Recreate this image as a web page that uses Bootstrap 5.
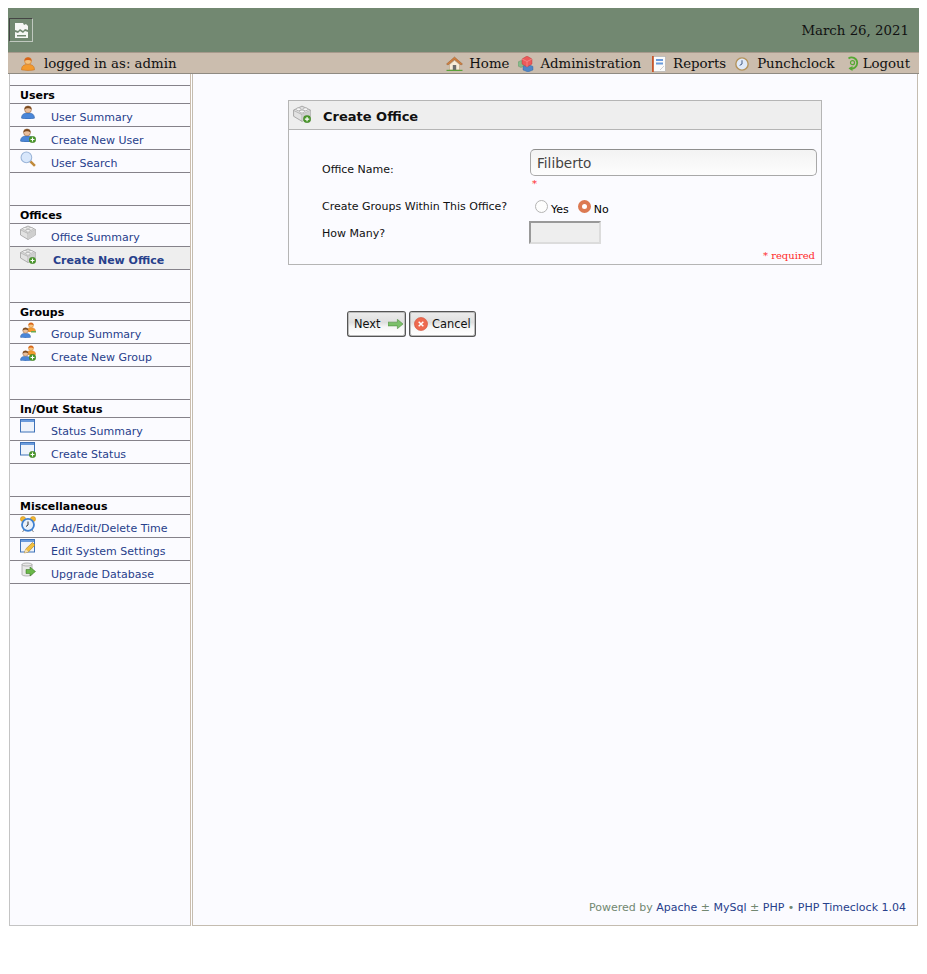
<!DOCTYPE html>
<html lang="en">
<head>
    <meta charset="UTF-8">
    <meta name="viewport" content="width=device-width, initial-scale=1.0">
    <title>PHP Timeclock - Create Office</title>
    <link href="https://cdn.jsdelivr.net/npm/bootstrap@5.3.0/dist/css/bootstrap.min.css" rel="stylesheet">
    <style>
        body { background: #fff; font-family: "DejaVu Sans", sans-serif; font-size: 11px; color: #000; }
        a { text-decoration: none; color: #27408b; }
        .page-wrap { width: 911px; margin: 8px 0 0 8px; }
        .top-bar { height: 44px; background: #728871; padding: 0 10px 0 1px; font-family: "DejaVu Serif", serif; font-size: 13.33px; color: #111; }
        .top-date { padding-top: 2px; }
        .logo-box { width: 24px; height: 24px; border: 1px solid #c0c8bf; border-top-color: #444; border-left-color: #444; background: #728871; }
        .sub-bar { height: 22px; background: #cbbdae; border-top: 1px solid #a69a8c; border-bottom: 1px solid #8f8a82; padding: 1px 9px 0 13px; font-family: "DejaVu Serif", serif; font-size: 13.33px; color: #111; }
        .sub-bar a { color: #111; }
        .who-icon { margin-right: 9px; }
        .top-link svg { flex: none; }
        .link-home svg, .link-admin svg { margin-right: 6px; }
        .link-admin { margin-left: 9px; }
        .link-reports { margin-left: 11px; }
        .link-reports svg { margin-right: 7px; }
        .link-punch { margin-left: 9px; }
        .link-punch svg { margin-right: 8px; }
        .link-logout { margin-left: 11px; }
        .link-logout svg { margin-right: 4px; }
        .body-row { height: 852px; padding-left: 1px; }
        .side-col { width: 182px; background: #fbfbff; border: 1px solid #c4c4c4; border-top: 0; border-right: 1px solid #cbbdae; padding-top: 11px; }
        .gap-col { width: 1px; background: #fff; }
        .main-col { position: relative; width: 726px; background: #fbfbff; border: 1px solid #c4bcb0; border-top: 0; }
        .side-group { margin-bottom: 32px; }
        .side-title { height: 19px; border-top: 1px solid #85828a; border-bottom: 1px solid #85828a; padding: 3px 0 0 10px; font-weight: 700; line-height: 13px; }
        .side-item { height: 23px; border-bottom: 1px solid #85828a; padding-left: 10px; line-height: 13px; }
        .side-item svg { flex: none; margin-top: 1px; width: 16px; height: 16px; }
        .side-item a { margin: 7px 0 0 15px; }
        .side-item.is-current { background: #eee; }
        .side-item.is-current a { font-weight: 700; margin-left: 17px; }
        .form-box { width: 534px; height: 165px; margin: 26px 0 0 95px; border: 1px solid #b5b5b5; }
        .form-head { height: 29px; background: #eee; border-bottom: 1px solid #b5b5b5; padding-left: 4px; font-size: 13px; font-weight: 700; color: #111; }
        .form-head svg { margin-top: 4px; }
        .form-head span { margin: 8px 0 0 12px; line-height: 15px; }
        .form-row { padding-left: 33px; }
        .row-name { height: 65px; }
        .row-radio { height: 26px; }
        .row-many { height: 23px; }
        .field-label { width: 208px; line-height: 13px; color: #111; }
        .label-name { margin-top: 33px; }
        .label-radio { margin-top: 5px; }
        .label-many { margin-top: 6px; }
        .name-input { width: 287px; height: 27px; margin-top: 19px; border: 1px solid #a8a8a8; border-top-color: #8e8e8e; border-radius: 5px; background: linear-gradient(#f3f3f3, #fdfdfd); font-size: 13.6px; color: #444; padding: 0 6px; font-family: "DejaVu Sans", sans-serif; outline: 0; }
        .req-star { color: #ff2a2a; font-family: "DejaVu Serif", serif; font-size: 10px; line-height: 10px; margin: 3px 0 0 2px; }
        .radio-set { margin-top: 5px; }
        .radio-off, .radio-on { display: block; width: 13px; height: 13px; border-radius: 50%; flex: none; }
        .radio-off { border: 1px solid #b4b4b4; background: #fdfdfd; margin-left: 5px; }
        .radio-on { border: 4px solid #dc7a52; background: #fff; margin-left: 9px; }
        .radio-text { margin: 3px 0 0 3px; line-height: 13px; }
        .how-many { width: 72px; height: 23px; margin-left: -1px; background: #eee; border: 2px solid #dcdcdc; border-top-color: #999; border-left-color: #999; }
        .req-note { color: #ff2a2a; font-family: "DejaVu Serif", serif; font-size: 10px; line-height: 12px; text-align: right; padding-right: 6px; margin-top: 6px; }
        .btn-row { margin: 46px 0 0 154px; gap: 3px; }
        .img-btn { height: 26px; border: 1px solid #555; border-bottom-width: 2px; border-radius: 3px; padding: 3px 0 0 6px; background: linear-gradient(#ececec 0, #dfdfdf 45%, #f6f6f6 65%, #fff 100%); color: #111; font-size: 11.4px; font-family: "DejaVu Sans", sans-serif; outline: 1px solid #bbb; outline-offset: -2px; }
        .btn-next { width: 59px; }
        .btn-next svg { margin-left: 7px; margin-top: -2px; }
        .btn-cancel { width: 67px; padding-left: 4px; }
        .btn-cancel svg { margin-right: 4px; margin-top: -2px; }
        .power-line { position: absolute; right: 11px; bottom: 11px; color: #728871; line-height: 13px; }
    </style>
</head>
<body>
    <svg width="0" height="0" class="position-absolute">
        <defs>
            <symbol id="ico-user" viewBox="0 0 16 16">
                <path d="M.6 15c0-4 2.400-6 7.400-6s7.400 2 7.400 6c-3 1.200-11.800 1.200-14.800 0z" fill="#4a86d8" stroke="#2b5a9e" stroke-width=".6"/>
                <circle cx="8" cy="5" r="4" fill="#eabf9c" stroke="#7a4a20" stroke-width=".5"/>
                <path d="M4 5c-.4-5.200 8.400-5.200 8 0-2-1.700-6-1.700-8 0z" fill="#7a4a20"/>
            </symbol>
            <symbol id="ico-orange-user" viewBox="0 0 16 16">
                <path d="M.6 15.200c0-4.200 2.400-6.200 7.400-6.200s7.400 2 7.400 6.200c-3 1-11.800 1-14.800 0z" fill="#f39a2e" stroke="#c86a10" stroke-width=".6"/>
                <circle cx="8" cy="5" r="4" fill="#f6c27c" stroke="#c86a10" stroke-width=".6"/>
                <path d="M4 5c-.4-5.200 8.400-5.200 8 0-2-1.400-6-1.400-8 0z" fill="#d8641a"/>
            </symbol>
            <symbol id="ico-plus" viewBox="0 0 8 8">
                <circle cx="4" cy="4" r="3.800" fill="#4d9a2e" stroke="#2f6b16" stroke-width=".4"/>
                <path d="M4 1.800v4.400M1.800 4h4.400" stroke="#fff" stroke-width="1.200"/>
            </symbol>
            <symbol id="ico-brick" viewBox="0 0 16 16">
                <path d="M.5 4.500L8 1l7.500 3.500v5.500L8 14.500.5 10z" fill="#e2e2e2" stroke="#a0a0a0" stroke-width=".8"/>
                <path d="M.5 4.800L8 8.500l7.500-3.700M8 8.500v6" fill="none" stroke="#a8a8a8" stroke-width=".7"/>
                <path d="M8 8.500l7.500-3.700V10L8 14.500z" fill="#cfcfcf"/>
                <ellipse cx="5" cy="3.800" rx="2.200" ry="1.300" fill="#f6f6f6" stroke="#a0a0a0" stroke-width=".6"/>
                <ellipse cx="11" cy="3.800" rx="2.200" ry="1.300" fill="#f6f6f6" stroke="#a0a0a0" stroke-width=".6"/>
                <ellipse cx="8" cy="5.800" rx="2.200" ry="1.300" fill="#f6f6f6" stroke="#a0a0a0" stroke-width=".6"/>
            </symbol>
            <symbol id="ico-window" viewBox="0 0 15 14">
                <rect x=".5" y=".5" width="14" height="12.500" fill="#eef3fb" stroke="#3f72b8"/>
                <rect x="1" y="1" width="13" height="2" fill="#6a9bdc"/>
            </symbol>
        </defs>
    </svg>

    <div class="page-wrap">
        <div class="top-bar d-flex justify-content-between align-items-center">
            <div class="logo-box d-flex align-items-center justify-content-center">
                <svg width="13" height="15" viewBox="0 0 13 15"><path d="M0 0h8l1 2 2-1 2 2v4l-3-1-2 2-3-2-2 2-3-1z" fill="#f6f7f5"/><path d="M0 9l3 1 2-2 3 2 2-2 3 1v6H0z" fill="#f6f7f5"/><path d="M2 12h9v1.500H2z" fill="#728871"/></svg>
            </div>
            <div class="top-date">March 26, 2021</div>
        </div>
        <div class="sub-bar d-flex justify-content-between align-items-center">
            <div class="d-flex align-items-center">
                <svg width="14" height="15" class="who-icon"><use href="#ico-orange-user"/></svg>
                <span>logged in as: admin</span>
            </div>
            <div class="d-flex align-items-center">
                <a href="#" class="top-link link-home d-flex align-items-center">
                    <svg width="17" height="15" viewBox="0 0 16 15"><path d="M3 8.500l5-4 5 4V14H3z" fill="#f7ecd8" stroke="#a88a60" stroke-width=".4"/><path d="M0 8l8-7 8 7-1.500 1L8 3.500 1.500 9z" fill="#d08040" stroke="#8a4f20" stroke-width=".4"/><rect x="6.300" y="9" width="3.400" height="5" fill="#6d6d6d"/><path d="M0 13.800h16V15H0z" fill="#5aa03a"/></svg>Home
                </a>
                <a href="#" class="top-link link-admin d-flex align-items-center">
                    <svg width="16" height="16" viewBox="0 0 16 16"><path d="M0 6l3-1.500L6 6v4l-3 1.500L0 10z" fill="#88b88a" stroke="#5a8a5c" stroke-width=".4"/><path d="M5 10.500l4.500-2.500L15 10.500V14l-5 2-5-2z" fill="#4f86c6" stroke="#2f5f9e" stroke-width=".4"/><path d="M4 3l5-3 5 3v5l-5 3-5-3z" fill="#ec5a5a" stroke="#b03030" stroke-width=".4"/><path d="M4 3l5 2.500L14 3M9 5.500V11" fill="none" stroke="#f7a0a0" stroke-width=".6"/></svg>Administration
                </a>
                <a href="#" class="top-link link-reports d-flex align-items-center">
                    <svg width="14" height="16" viewBox="0 0 14 16"><rect x="1" y=".5" width="12.500" height="15" fill="#fbfbfb" stroke="#aaa" stroke-width=".6"/><rect width="1.800" height="16" fill="#c8562a"/><rect x="4" y="3" width="7" height="2" fill="#6a9bdc"/><rect x="4" y="6.500" width="7" height="2" fill="#6a9bdc"/><path d="M8 14l4-4" stroke="#bbb" stroke-width=".7"/></svg>Reports
                </a>
                <a href="#" class="top-link link-punch d-flex align-items-center">
                    <svg width="14" height="14" viewBox="0 0 15 15"><circle cx="7.500" cy="7.500" r="6.600" fill="#dfe9f8" stroke="#b4935a" stroke-width="1.500"/><path d="M7.500 3.500v4l-2.500 1.500" fill="none" stroke="#38507a" stroke-width="1"/></svg>Punchclock
                </a>
                <a href="#" class="top-link link-logout d-flex align-items-center">
                    <svg width="13" height="15" viewBox="0 0 13 15"><path d="M2.500 2.500a5.500 5.500 0 1 1 1 9.500" fill="none" stroke="#55a833" stroke-width="1.800"/><path d="M6.500 10l-4 2.500 4 2.500z" fill="#55a833"/><circle cx="6.500" cy="6.700" r="2" fill="none" stroke="#55a833" stroke-width="1.200"/></svg>Logout
                </a>
            </div>
        </div>

        <div class="body-row d-flex">
            <div class="side-col">
                <div class="side-group">
                    <div class="side-title">Users</div>
                    <div class="side-item d-flex"><svg viewBox="0 0 16 16"><use href="#ico-user" x="1" width="14" height="14"/></svg><a href="#">User Summary</a></div>
                    <div class="side-item d-flex"><svg viewBox="0 0 16 16"><use href="#ico-user" x="0" width="14" height="14"/><use href="#ico-plus" x="9" y="8" width="7" height="7"/></svg><a href="#">Create New User</a></div>
                    <div class="side-item d-flex"><svg viewBox="0 0 15 15"><path d="M9 9l5 5" stroke="#c08a3a" stroke-width="2.400"/><circle cx="6" cy="6" r="5" fill="#d8e7fb" stroke="#9ab4d8"/></svg><a href="#">User Search</a></div>
                </div>
                <div class="side-group">
                    <div class="side-title">Offices</div>
                    <div class="side-item d-flex"><svg viewBox="0 0 16 16"><use href="#ico-brick"/></svg><a href="#">Office Summary</a></div>
                    <div class="side-item is-current d-flex"><svg viewBox="0 0 16 16"><use href="#ico-brick"/><use href="#ico-plus" x="9" y="9" width="7" height="7"/></svg><a href="#">Create New Office</a></div>
                </div>
                <div class="side-group">
                    <div class="side-title">Groups</div>
                    <div class="side-item d-flex"><svg viewBox="0 0 16 16"><use href="#ico-orange-user" x="6" y="0" width="10" height="10"/><path d="M11 9h5v1.500h-5z" fill="#6aa84f"/><use href="#ico-user" x="0" y="5" width="11" height="11"/></svg><a href="#">Group Summary</a></div>
                    <div class="side-item d-flex"><svg viewBox="0 0 16 16"><use href="#ico-orange-user" x="6" y="0" width="10" height="10"/><use href="#ico-user" x="0" y="5" width="11" height="11"/><use href="#ico-plus" x="9" y="9" width="7" height="7"/></svg><a href="#">Create New Group</a></div>
                </div>
                <div class="side-group">
                    <div class="side-title">In/Out Status</div>
                    <div class="side-item d-flex"><svg viewBox="0 0 16 16"><use href="#ico-window" width="15" height="14"/></svg><a href="#">Status Summary</a></div>
                    <div class="side-item d-flex"><svg viewBox="0 0 16 16"><use href="#ico-window" width="15" height="14"/><use href="#ico-plus" x="9" y="9" width="7" height="7"/></svg><a href="#">Create Status</a></div>
                </div>
                <div class="side-group">
                    <div class="side-title">Miscellaneous</div>
                    <div class="side-item d-flex"><svg viewBox="0 0 16 16"><circle cx="3" cy="3" r="2.600" fill="#f2b530" stroke="#b07a10" stroke-width=".4"/><circle cx="13" cy="3" r="2.600" fill="#f2b530" stroke="#b07a10" stroke-width=".4"/><path d="M4 14l-1.500 2M12 14l1.500 2" stroke="#888"/><circle cx="8" cy="8.800" r="6" fill="#e8f0fb" stroke="#3f80d0" stroke-width="1.800"/><path d="M8 5.500V9l-2 1.500" fill="none" stroke="#333" stroke-width="1"/></svg><a href="#">Add/Edit/Delete Time</a></div>
                    <div class="side-item d-flex"><svg viewBox="0 0 16 16"><use href="#ico-window" width="15" height="14"/><path d="M4.500 14l1.200-4L12.500 3.500 15 6l-6.500 6.800z" fill="#f2c040" stroke="#a87a20" stroke-width=".6"/><path d="M4.500 14l1.200-4 2.800 2.800z" fill="#f4e0b8"/></svg><a href="#">Edit System Settings</a></div>
                    <div class="side-item d-flex"><svg viewBox="0 0 16 16"><path d="M2 2.500C2 .5 12 .5 12 2.500v10c0 2-10 2-10 0z" fill="#e8e8e8" stroke="#9a9a9a" stroke-width=".7"/><path d="M2 2.500c0 2 10 2 10 0" fill="none" stroke="#9a9a9a" stroke-width=".7"/><path d="M6 7.500h4V5l5.500 4.500L10 14v-2.500H6z" fill="#6ab84a" stroke="#2f6b16" stroke-width=".5"/></svg><a href="#">Upgrade Database</a></div>
                </div>
            </div>
            <div class="gap-col"></div>
            <div class="main-col">
                <div class="form-box">
                    <div class="form-head d-flex">
                        <svg width="18" height="18" viewBox="0 0 16 16"><use href="#ico-brick"/><use href="#ico-plus" x="9" y="9" width="7" height="7"/></svg>
                        <span>Create Office</span>
                    </div>
                    <div class="form-row row-name d-flex">
                        <div class="field-label label-name">Office Name:</div>
                        <div>
                            <input type="text" class="name-input d-block" value="Filiberto">
                            <div class="req-star">*</div>
                        </div>
                    </div>
                    <div class="form-row row-radio d-flex">
                        <div class="field-label label-radio">Create Groups Within This Office?</div>
                        <div class="radio-set d-flex">
                            <span class="radio-off"></span><span class="radio-text">Yes</span>
                            <span class="radio-on"></span><span class="radio-text">No</span>
                        </div>
                    </div>
                    <div class="form-row row-many d-flex">
                        <div class="field-label label-many">How Many?</div>
                        <div class="how-many"></div>
                    </div>
                    <div class="req-note">* required</div>
                </div>
                <div class="btn-row d-flex">
                    <button type="button" class="img-btn btn-next d-flex align-items-center">Next<svg width="15" height="10" viewBox="0 0 16 10"><path d="M0 3h10V0l6 5-6 5V7H0z" fill="#7cc06a" stroke="#4a8a3a" stroke-width=".6"/></svg></button>
                    <button type="button" class="img-btn btn-cancel d-flex align-items-center"><svg width="14" height="14" viewBox="0 0 15 15"><circle cx="7.500" cy="7.500" r="7" fill="#ee6a50" stroke="#d04a30" stroke-width=".6"/><path d="M5 5l5 5M10 5l-5 5" stroke="#fff" stroke-width="1.600"/></svg>Cancel</button>
                </div>
                <div class="power-line">Powered by <a href="#">Apache</a> &plusmn; <a href="#">MySql</a> &plusmn; <a href="#">PHP</a> &bull; <a href="#">PHP Timeclock 1.04</a></div>
            </div>
        </div>
    </div>

    <script src="https://cdn.jsdelivr.net/npm/bootstrap@5.3.0/dist/js/bootstrap.bundle.min.js"></script>
</body>
</html>
